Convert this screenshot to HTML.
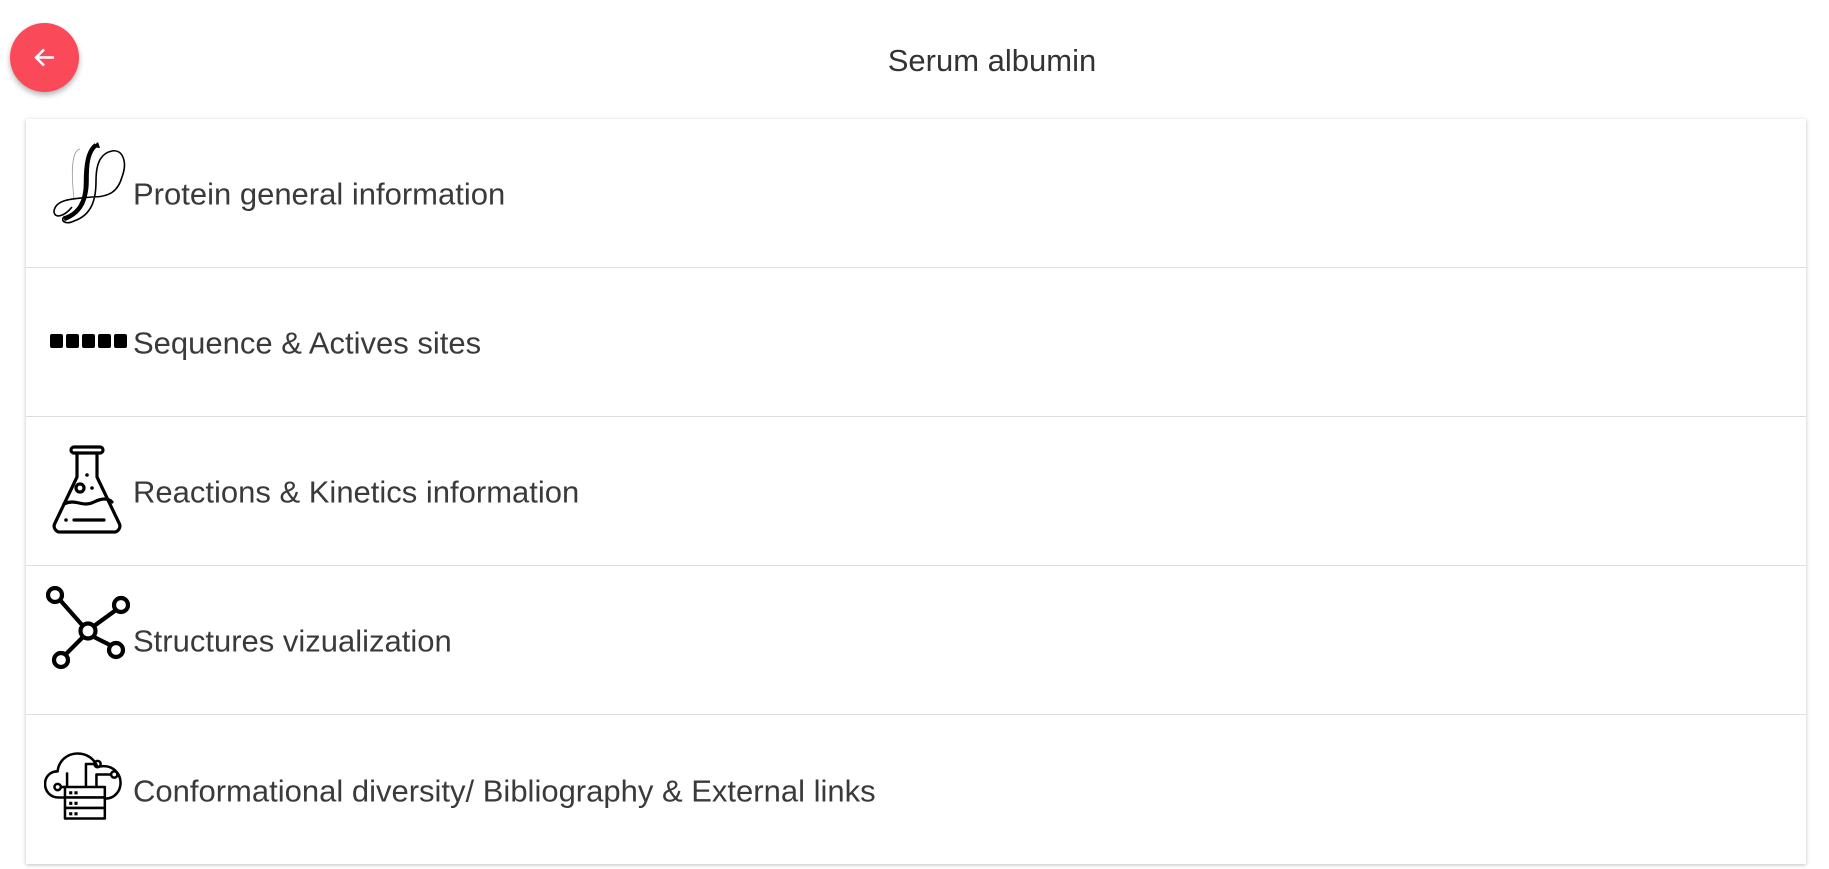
<!DOCTYPE html>
<html><head><meta charset="utf-8"><style>
*{box-sizing:border-box;margin:0;padding:0}
body{width:1829px;height:869px;background:#fff;font-family:"Liberation Sans",sans-serif;color:#333;position:relative;overflow:hidden}
.fab{position:absolute;left:10px;top:23px;width:69px;height:69px;border-radius:50%;background:#fa4a59;box-shadow:0 3px 6px rgba(0,0,0,.3)}
.title{position:absolute;left:0;width:1984px;top:43px;text-align:center;font-size:31px;color:#333}
.card{position:absolute;left:26px;top:119px;width:1780px;height:745px;background:#fff;box-shadow:0 1px 4px rgba(0,0,0,.25)}
.row{height:149px;border-bottom:1px solid #ddd;position:relative}
.row:last-child{border-bottom:none}
.row span{position:absolute;left:107px;top:50%;transform:translateY(-46%);font-size:31px;color:#3a3a3a;white-space:nowrap}
.row svg{position:absolute}
</style></head><body>
<div class="fab"><svg width="69" height="69" viewBox="0 0 69 69"><path d="M44 34.5H26M34 26.5l-8 8 8 8" stroke="#fff" stroke-width="2.6" fill="none"/></svg></div>
<div class="title">Serum albumin</div>
<div class="card">
<div class="row"><svg style="left:26px;top:22px" width="76" height="86" viewBox="0 0 76 86">
<path d="M28 8C18 10 20 40 22 58" stroke="#999" stroke-width="0.8" fill="none"/>
<path d="M44 4C38 6 36 20 36 40C36 58 30 70 12 76C8 80 14 84 22 80C40 74 44 58 44 40C44 20 50 12 60 10C70 8 76 20 70 36C66 50 58 56 40 56C20 58 4 58 2 70C2 78 12 76 20 66" stroke="#000" stroke-width="1.6" fill="none"/>
<path d="M44 4C36 10 34 24 34 42C34 60 28 72 12 78" stroke="#000" stroke-width="4.5" fill="none"/>
<path d="M40 6l6-5 2 6z" fill="#000"/>
</svg><span>Protein general information</span></div>
<div class="row"><svg style="left:24px;top:66px" width="78" height="15" viewBox="0 0 78 15">
<rect x="0" y="0" width="13" height="14" rx="2"/><rect x="16" y="0" width="13" height="14" rx="2"/><rect x="32" y="0" width="13" height="14" rx="2"/><rect x="48" y="0" width="13" height="14" rx="2"/><rect x="64" y="0" width="13" height="14" rx="2"/>
</svg><span>Sequence &amp; Actives sites</span></div>
<div class="row"><svg style="left:26px;top:28px" width="72" height="90" viewBox="0 0 72 90">
<g stroke="#000" stroke-width="3.2" fill="none" stroke-linecap="round" stroke-linejoin="round">
<path d="M22 2h26a3 3 0 010 6H22a3 3 0 010-6z"/>
<path d="M25 8v24L3 78a6 6 0 006 9h52a6 6 0 006-9L45 32V8"/>
<path d="M12 59c12-6 18 4 30-2 8-4 14-4 18 0"/>
<path d="M22 75h30"/>
<circle cx="28" cy="43" r="4"/>
</g><circle cx="35" cy="30" r="1.8"/><circle cx="40" cy="43" r="1.8"/><circle cx="14" cy="75" r="1.8"/>
</svg><span>Reactions &amp; Kinetics information</span></div>
<div class="row"><svg style="left:20px;top:20px" width="84" height="84" viewBox="0 0 84 84">
<g stroke="#000" stroke-width="4.2" fill="none">
<circle cx="9" cy="9" r="7"/><circle cx="75" cy="19" r="7"/><circle cx="42" cy="45" r="7.5"/><circle cx="15" cy="74" r="7"/><circle cx="70" cy="64" r="7"/>
<path d="M14 14l23 26M70 24L48 40M37 51L20 68M48 51l16 8"/>
</g></svg><span>Structures vizualization</span></div>
<div class="row"><svg style="left:18px;top:30px" width="86" height="82" viewBox="0 0 82 70">
<g stroke="#000" stroke-width="2.4" fill="none" stroke-linejoin="round">
<path d="M20 46H14C6 46 1 40 1 33c0-7 5-12 12-12 1-10 9-17 19-17 9 0 16 5 19 13 2-1 4-1 6-1 9 0 16 7 16 16 0 8-6 15-14 15h-3"/>
<path d="M16 36h6M22 36V22M40 36V14h8M50 36V24h14"/>
<circle cx="13" cy="36" r="3"/><circle cx="51" cy="14" r="3"/><circle cx="67" cy="24" r="3"/>
<rect x="20" y="36" width="38" height="10" fill="#fff"/><rect x="20" y="46" width="38" height="10" fill="#fff"/><rect x="20" y="56" width="38" height="10" fill="#fff"/>
</g><rect x="24" y="40" width="3" height="3"/><rect x="29" y="40" width="3" height="3"/><rect x="24" y="50" width="3" height="3"/><rect x="29" y="50" width="3" height="3"/><rect x="24" y="60" width="3" height="3"/><rect x="29" y="60" width="3" height="3"/>
</svg><span>Conformational diversity/ Bibliography &amp; External links</span></div>
</div>
</body></html>
